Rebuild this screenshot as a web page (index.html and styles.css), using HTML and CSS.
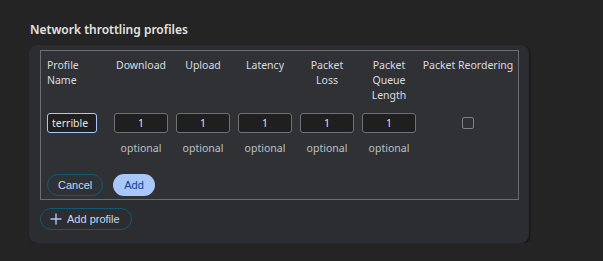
FILE: index.html
```html
<!DOCTYPE html>
<html lang="en">

<head>
    <meta charset="UTF-8">
    <meta name="viewport" content="width=device-width, initial-scale=1.0">
    <title>Network throttling profiles</title>
    <link rel="stylesheet" href="styles.css">
</head>

<body>
    <div class="settings">
        <h2 class="title">Network throttling profiles</h2>
        <div class="card">
            <div class="profile-table">
                <div class="head head-left">Profile Name</div>
                <div class="head">Download</div>
                <div class="head">Upload</div>
                <div class="head">Latency</div>
                <div class="head">Packet Loss</div>
                <div class="head">Packet Queue Length</div>
                <div class="head head-wide">Packet Reordering</div>

                <div class="cell cell-left"><input class="field field-name" type="text" value="terrible"></div>
                <div class="cell"><input class="field" type="text" value="1"></div>
                <div class="cell"><input class="field" type="text" value="1"></div>
                <div class="cell"><input class="field" type="text" value="1"></div>
                <div class="cell"><input class="field" type="text" value="1"></div>
                <div class="cell"><input class="field" type="text" value="1"></div>
                <div class="cell"><span class="check"></span></div>

                <div class="hint"></div>
                <div class="hint">optional</div>
                <div class="hint">optional</div>
                <div class="hint">optional</div>
                <div class="hint">optional</div>
                <div class="hint">optional</div>
                <div class="hint"></div>

                <div class="actions">
                    <button class="btn btn-outline" type="button">Cancel</button>
                    <button class="btn btn-filled" type="button">Add</button>
                </div>
            </div>

            <button class="btn btn-outline btn-add" type="button">
                <svg width="12" height="12" viewBox="0 0 12 12"><path d="M6 0.5v11M0.5 6h11" stroke="#a8c7fa" stroke-width="1.4" fill="none"/></svg>
                Add profile
            </button>
        </div>
    </div>
</body>

</html>
```

FILE: styles.css
```css
body {
    margin: 0;
    background-color: #242424; /* page */
    font-family: "Noto Sans", sans-serif;
    color: #e3e3e3;
}

.settings {
    padding: 21px 0 0 29px;
}

.title {
    margin: 0 0 6px 1px;
    font-size: 12px;
    font-weight: 600;
    line-height: 18px;
    color: #e3e3e3;
}

.card {
    width: 500px;
    box-sizing: border-box;
    padding: 5px 11px 13px 11px;
    border-radius: 8px;
    background-color: #2c2d30;
    box-shadow: 1px 1px 2px rgba(0, 0, 0, 0.5);
}

.profile-table {
    display: grid;
    grid-template-columns: 63px repeat(5, 62px) 1fr;
    width: 479px;
    box-sizing: border-box;
    padding: 7px 0 3px 6px;
    border: 1px solid #6a6d72;
    background-color: #303134;
    font-size: 10.5px;
    line-height: 15px;
    color: #dadce0;
}

.head {
    text-align: center;
    padding: 0 6px 10px;
}

.head-left {
    text-align: left;
    padding: 0 14px 10px 0;
}

.head-wide {
    padding: 0 2px 10px 0;
}

.cell {
    display: flex;
    justify-content: center;
    align-items: center;
    height: 20px;
}

.cell-left {
    justify-content: flex-start;
}

.field {
    width: 54px;
    height: 20px;
    box-sizing: border-box;
    padding: 0;
    border: 1px solid #6e7175;
    border-radius: 3px;
    background-color: #1f1f1f;
    color: #e3e3e3;
    font-family: "Noto Sans", sans-serif;
    font-size: 10.5px;
    text-align: center;
}

.field-name {
    width: 50px;
    border-color: #a8c7fa;
    text-align: left;
    padding-left: 4px;
}

.check {
    width: 10px;
    height: 10px;
    border: 1px solid #7d8085;
    border-radius: 2px;
    margin-right: 2px;
}

.hint {
    text-align: center;
    color: #bdc1c6;
    padding-top: 8px;
}

.actions {
    grid-column: 1 / -1;
    display: flex;
    gap: 10px;
    padding-top: 18px;
}

.btn {
    height: 22px;
    box-sizing: border-box;
    border-radius: 11px;
    font-family: "Liberation Sans", Arial, sans-serif;
    font-size: 11px;
    padding: 0 10px;
    cursor: pointer;
}

.btn-outline {
    border: 1px solid #0f5a74;
    background-color: transparent;
    color: #c2dcf7;
}

.btn-filled {
    border: none;
    background-color: #a8c7fa;
    color: #0b3f8f;
    padding: 0 11px;
}

.btn-add {
    display: flex;
    align-items: center;
    gap: 5px;
    margin-top: 8px;
    padding: 0 11px 0 9px;
}
```
